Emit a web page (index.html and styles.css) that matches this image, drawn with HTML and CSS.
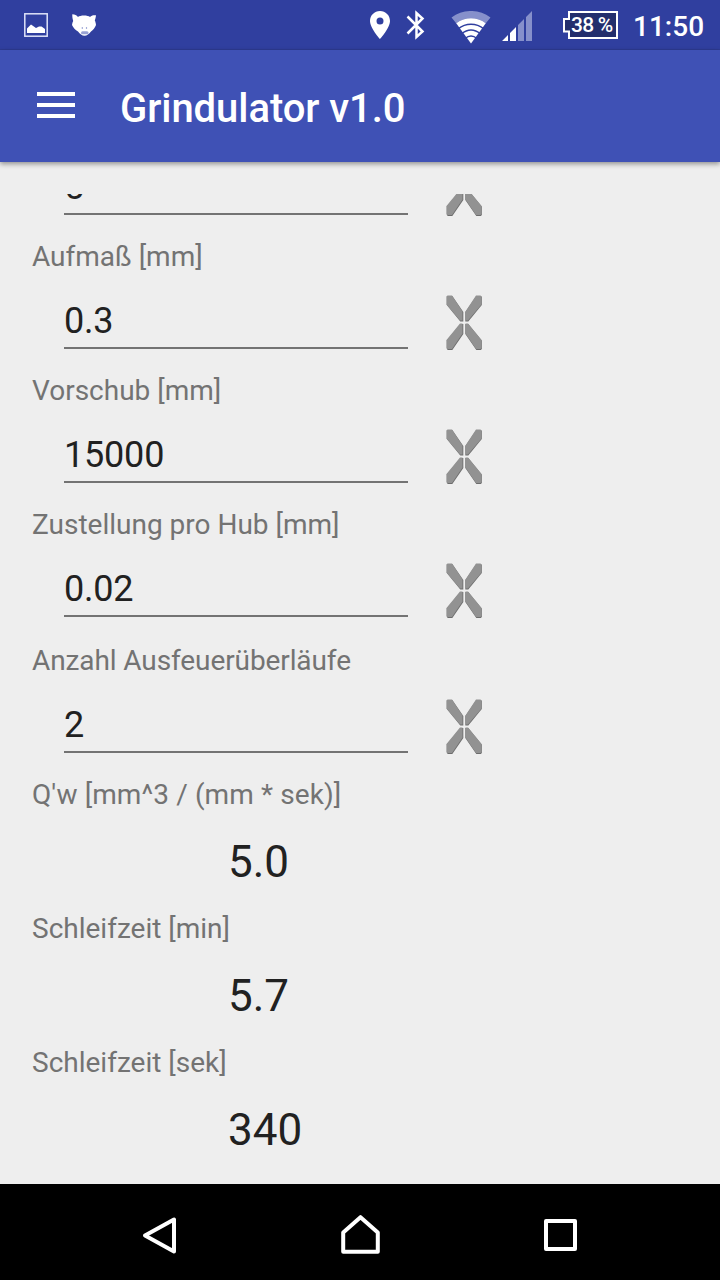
FILE: index.html
```
<!DOCTYPE html>
<html lang="de">
<head>
    <meta charset="UTF-8">
    <meta name="viewport" content="width=device-width, initial-scale=1.0">
    <title>Grindulator v1.0</title>
    <link rel="stylesheet" href="styles.css">
</head>
<body>
    <!-- clear icon used by every input row -->
    <svg class="defs" width="0" height="0">
        <symbol id="clear" viewBox="0 0 40 56">
            <g fill="#6c6c6c" transform="translate(0.3 0.6)">
                <path d="M2.5 0.5H7L18 16.5V26H15L1.5 9.5V1.5Z"/>
                <path d="M35.5 0.5H31L20 16.5V26H23L36.5 9.5V1.5Z"/>
                <path d="M2.5 54.5H7L18 38.5V28.5H15L1.5 45V53.5Z"/>
                <path d="M35.5 54.5H31L20 38.5V28.5H23L36.5 45V53.5Z"/>
            </g>
            <g fill="#929292">
                <path d="M2.5 0.5H7L17.5 16.5V25.5H15L1.5 9.5V1.5Z"/>
                <path d="M35.5 0.5H31L20.5 16.5V25.5H23L36.5 9.5V1.5Z"/>
                <path d="M2.5 54H7L17.5 38.5V28.5H15L1.5 45V53Z"/>
                <path d="M35.5 54H31L20.5 38.5V28.5H23L36.5 45V53Z"/>
            </g>
        </symbol>
    </svg>

    <div class="statusbar">
        <svg class="icon-image" width="24" height="24" viewBox="0 0 24 24">
            <rect x="0.8" y="0.8" width="22.4" height="22.4" fill="none" stroke="#dfe3f8" stroke-width="1.5"/>
            <path d="M3 20V15.5L7 11.5L12 15L15 13.5H17.5L21 16V20Z" fill="#fff"/>
        </svg>
        <svg class="icon-pig" width="24" height="22" viewBox="0 0 24 22">
            <path d="M0.3 0.3C3 0.3 4.5 1.2 6 3C8 1 16 1 18 3C19.5 1.2 21.5 1 24 1.3C23.8 3.5 23.4 5 22.8 6.5C23.4 7.500 23.800 9 24 11C23.200 13.500 21 16 19 17.500C17 20.200 15 21.700 12.500 21.700C10 21.700 8 20.200 6 17.500C3.500 16 1 13.500 0 11C0.200 9.500 0.600 8 1.200 7C0.500 5 0.200 2.500 0.300 0.300Z" fill="#fff"/>
            <circle cx="10.3" cy="14" r="0.7" fill="#7480c4"/>
            <circle cx="14.5" cy="14" r="0.7" fill="#7480c4"/>
            <rect x="9" y="17.300" width="7.5" height="3" rx="1.5" fill="#98a1d3"/>
        </svg>
        <svg class="icon-pin" width="20" height="28" viewBox="0 0 20 28">
            <path d="M10 0C4.4 0 0 4.4 0 9.9C0 17 10 28 10 28S20 17 20 9.9C20 4.4 15.6 0 10 0ZM10 6.4A3.5 3.5 0 1 1 10 13.4A3.5 3.5 0 1 1 10 6.4Z" fill="#fff"/>
        </svg>
        <svg class="icon-bluetooth" width="20" height="30" viewBox="0 0 20 30">
            <path d="M1.5 6.5L16.5 21.5L10.5 27V3L16.5 8.5L1.5 23.5" fill="none" stroke="#fff" stroke-width="2.5"/>
        </svg>
        <svg class="icon-wifi" width="40" height="33" viewBox="0 0 40 33">
            <path d="M0.5 6.5C12 -2.2 28 -2.2 39.5 6.5L34.8 12.3C26 5.6 14 5.6 5.2 12.3Z" fill="#8690cb"/>
            <path d="M5.2 12.3C14 5.6 26 5.6 34.8 12.3L20 32.5Z" fill="#fff"/>
            <g fill="none" stroke="#303f9f" stroke-width="1.5">
                <path d="M7 18C15 11.800 25 11.800 33 18"/>
                <path d="M10.5 23C16.5 18 23.5 18 29.5 23"/>
                <path d="M14 27.5C18 24.300 22 24.300 26 27.5"/>
            </g>
        </svg>
        <svg class="icon-signal" width="30" height="30" viewBox="0 0 30 30">
            <path d="M0 30L6 24V30ZM8 22L14 16V30H8Z" fill="#fff"/>
            <path d="M16 14L22 8V30H16ZM24 6L30 0V30H24Z" fill="#8690cb"/>
        </svg>
        <div class="battery">
            <svg class="battery-frame" width="55" height="28" viewBox="0 0 55 28">
                <path d="M6 1H54V27H6V20.5H1V8H6Z" fill="#232e6d" stroke="#fff" stroke-width="2"/>
            </svg>
            <span class="battery-text">38 %</span>
        </div>
        <span class="clock">11:50</span>
    </div>

    <div class="appbar">
        <div class="menu">
            <span></span>
            <span></span>
            <span></span>
        </div>
        <h1>Grindulator v1.0</h1>
    </div>

    <div class="content">
        <div class="group">
            <div class="field">
                <div class="value">5</div>
                <svg class="clear"><use href="#clear"/></svg>
            </div>
        </div>
        <div class="group">
            <div class="label">Aufmaß [mm]</div>
            <div class="field">
                <div class="value">0.3</div>
                <svg class="clear"><use href="#clear"/></svg>
            </div>
        </div>
        <div class="group">
            <div class="label">Vorschub [mm]</div>
            <div class="field">
                <div class="value">15000</div>
                <svg class="clear"><use href="#clear"/></svg>
            </div>
        </div>
        <div class="group">
            <div class="label">Zustellung pro Hub [mm]</div>
            <div class="field">
                <div class="value">0.02</div>
                <svg class="clear"><use href="#clear"/></svg>
            </div>
        </div>
        <div class="group group-last">
            <div class="label label-tight">Anzahl Ausfeuerüberläufe</div>
            <div class="field">
                <div class="value">2</div>
                <svg class="clear"><use href="#clear"/></svg>
            </div>
        </div>
        <div class="group">
            <div class="label label-wide">Q'w [mm^3 / (mm * sek)]</div>
            <div class="result">5.0</div>
        </div>
        <div class="group">
            <div class="label">Schleifzeit [min]</div>
            <div class="result">5.7</div>
        </div>
        <div class="group">
            <div class="label">Schleifzeit [sek]</div>
            <div class="result">340</div>
        </div>
    </div>

    <div class="navbar">
        <svg width="40" height="44" viewBox="0 0 40 44">
            <path d="M34 5.5V37.5L5 21.5Z"/>
        </svg>
        <svg width="40" height="44" viewBox="0 0 40 44">
            <path d="M3.2 37.8V18.5L20.5 3.2L37.8 18.5V37.8Z"/>
        </svg>
        <svg width="40" height="44" viewBox="0 0 40 44">
            <path d="M6 7H35V35H6Z"/>
        </svg>
    </div>
</body>
</html>
```
FILE: styles.css
```
body {
    margin: 0;
    width: 720px;
    height: 1280px;
    display: flex;
    flex-direction: column;
    overflow: hidden;
    background-color: #eeeeee;
    font-family: Roboto, "Liberation Sans", sans-serif;
}

svg {
    display: block;
    flex: none;
}

.defs {
    display: none;
}

/* status bar */
.statusbar {
    box-sizing: border-box;
    height: 50px;
    flex: none;
    display: flex;
    align-items: flex-start;
    padding-left: 24px;
    background-color: #303f9f;
    border-bottom: 1px solid #2e3b93;
    color: white;
}

.icon-image {
    margin-top: 13px;
}

.icon-pig {
    margin: 14px 0 0 24px;
}

.icon-pin {
    margin: 11px 0 0 274px;
}

.icon-bluetooth {
    margin: 10px 0 0 16px;
}

.icon-wifi {
    margin: 11px 0 0 25px;
}

.icon-signal {
    margin: 11px 0 0 11px;
}

.battery {
    position: relative;
    width: 55px;
    height: 28px;
    margin: 11px 0 0 31px;
}

.battery-text {
    position: absolute;
    left: 8px;
    top: 3px;
    font-size: 21px;
    line-height: 23px;
    font-weight: 500;
    letter-spacing: -0.8px;
    white-space: nowrap;
}

.clock {
    margin: 10px 0 0 15px;
    font-size: 28px;
    line-height: 34px;
    font-weight: 500;
}

/* app bar */
.appbar {
    height: 112px;
    flex: none;
    display: flex;
    align-items: center;
    background-color: #3f51b5;
    color: white;
    box-shadow: 0 2px 5px rgba(0, 0, 0, 0.4);
}

.menu {
    display: flex;
    flex-direction: column;
    gap: 7px;
    width: 38px;
    margin: 0 45px 2px 37px;
}

.menu span {
    height: 4px;
    background-color: white;
}

h1 {
    margin: 6px 0 0;
    font-size: 40px;
    line-height: 48px;
    font-weight: 500;
    letter-spacing: -0.06px;
}

/* scrolled form, the end of the list is visible */
.content {
    flex: 1;
    min-height: 0;
    margin-top: 32px;
    padding-bottom: 29px;
    overflow: hidden;
    display: flex;
    flex-direction: column;
    justify-content: flex-end;
}

.group {
    box-sizing: border-box;
    height: 134px;
    flex: none;
    display: flex;
    flex-direction: column;
    justify-content: flex-end;
    padding-left: 32px;
}

.group-last {
    height: 136px;
}

.label {
    font-size: 28px;
    line-height: 33px;
    color: #737373;
}

.label-tight {
    letter-spacing: -0.1px;
}

.label-wide {
    letter-spacing: 0.1px;
}

.field {
    display: flex;
    align-items: flex-end;
    height: 76px;
    padding-left: 32px;
}

.value {
    width: 344px;
    padding-bottom: 5px;
    border-bottom: 2px solid #737373;
    font-size: 36px;
    line-height: 42px;
    letter-spacing: -0.2px;
    color: #212121;
}

.clear {
    width: 40px;
    height: 56px;
    margin: 0 0 -2px 37px;
}

.result {
    height: 76px;
    padding-left: 196px;
    font-size: 44px;
    line-height: 102px;
    color: #212121;
}

/* navigation bar */
.navbar {
    box-sizing: border-box;
    height: 96px;
    flex: none;
    display: flex;
    justify-content: center;
    align-items: center;
    gap: 160px;
    padding-top: 8px;
    background-color: black;
}

.navbar path {
    fill: none;
    stroke: white;
    stroke-width: 4;
    stroke-linejoin: round;
}
```
